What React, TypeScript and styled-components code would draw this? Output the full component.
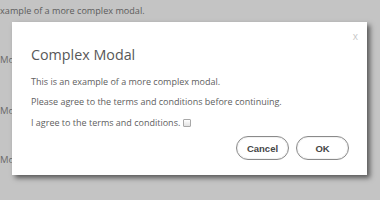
import React from 'react';
import styled, { createGlobalStyle } from 'styled-components';

const GlobalStyle = createGlobalStyle`
  html, body {
    margin: 0;
    padding: 0;
    background: #c4c4c4;
  }
  body {
    width: 380px;
    height: 200px;
    overflow: hidden;
    font-family: 'Open Sans', 'DejaVu Sans', sans-serif;
  }
`;

const Page = styled.div`
  position: relative;
  width: 380px;
  height: 200px;
  overflow: hidden;
`;

const Backdrop = styled.div`
  display: flex;
  flex-direction: column;
  margin-left: -5px;
  padding-top: 3px;
`;

const Intro = styled.p`
  margin: 0;
  font-size: 9.1px;
  line-height: 16px;
  color: #5c5c5c;
`;

const DemoRow = styled.p<{ $gap: number }>`
  margin: 0;
  font-size: 9.5px;
  line-height: 16px;
  color: #6a6a6a;
  padding-left: 5px;
  margin-top: ${({ $gap }) => $gap}px;
`;

const Modal = styled.div`
  position: absolute;
  left: 12px;
  top: 22px;
  width: 355px;
  height: 153px;
  box-sizing: border-box;
  background: #fff;
  box-shadow: 3px 3px 5px rgba(0, 0, 0, 0.55);
  padding: 23px 18px 0 19px;
  display: flex;
  flex-direction: column;
`;

const Close = styled.span`
  position: absolute;
  top: 7px;
  right: 9px;
  font-size: 10px;
  color: #c8c8c8;
`;

const Title = styled.h2`
  margin: 0;
  font-size: 14.3px;
  font-weight: 400;
  line-height: 20px;
  color: #585858;
`;

const Text = styled.p<{ $top: number }>`
  margin: 0;
  margin-top: ${({ $top }) => $top}px;
  font-size: 9px;
  line-height: 14px;
  color: #606060;
  display: flex;
  align-items: center;
`;

const Check = styled.span`
  display: inline-block;
  width: 6px;
  height: 6px;
  margin-left: 3px;
  border: 1px solid #a8a8a8;
  border-radius: 1px;
  background: linear-gradient(#fff, #e2e2e2);
`;

const Footer = styled.div`
  display: flex;
  justify-content: flex-end;
  gap: 7px;
  margin-top: 6px;
`;

const Button = styled.button`
  width: 53px;
  height: 24px;
  border-radius: 12px;
  border: 1px solid #8a8a8a;
  background: #fff;
  box-shadow: inset 0 0 0 1px #f2f2f2;
  font-family: 'Liberation Sans', Arial, sans-serif;
  font-weight: 700;
  font-size: 9.5px;
  color: #464646;
  padding: 0;
`;

export default function App() {
  return (
    <Page>
      <GlobalStyle />
      <Backdrop>
        <Intro>example of a more complex modal.</Intro>
        <DemoRow $gap={33}>Modal</DemoRow>
        <DemoRow $gap={35}>Modal</DemoRow>
        <DemoRow $gap={33}>Modal</DemoRow>
      </Backdrop>
      <Modal>
        <Close>x</Close>
        <Title>Complex Modal</Title>
        <Text $top={10}>This is an example of a more complex modal.</Text>
        <Text $top={6}>Please agree to the terms and conditions before continuing.</Text>
        <Text $top={7}>
          I agree to the terms and conditions.
          <Check />
        </Text>
        <Footer>
          <Button>Cancel</Button>
          <Button>OK</Button>
        </Footer>
      </Modal>
    </Page>
  );
}
